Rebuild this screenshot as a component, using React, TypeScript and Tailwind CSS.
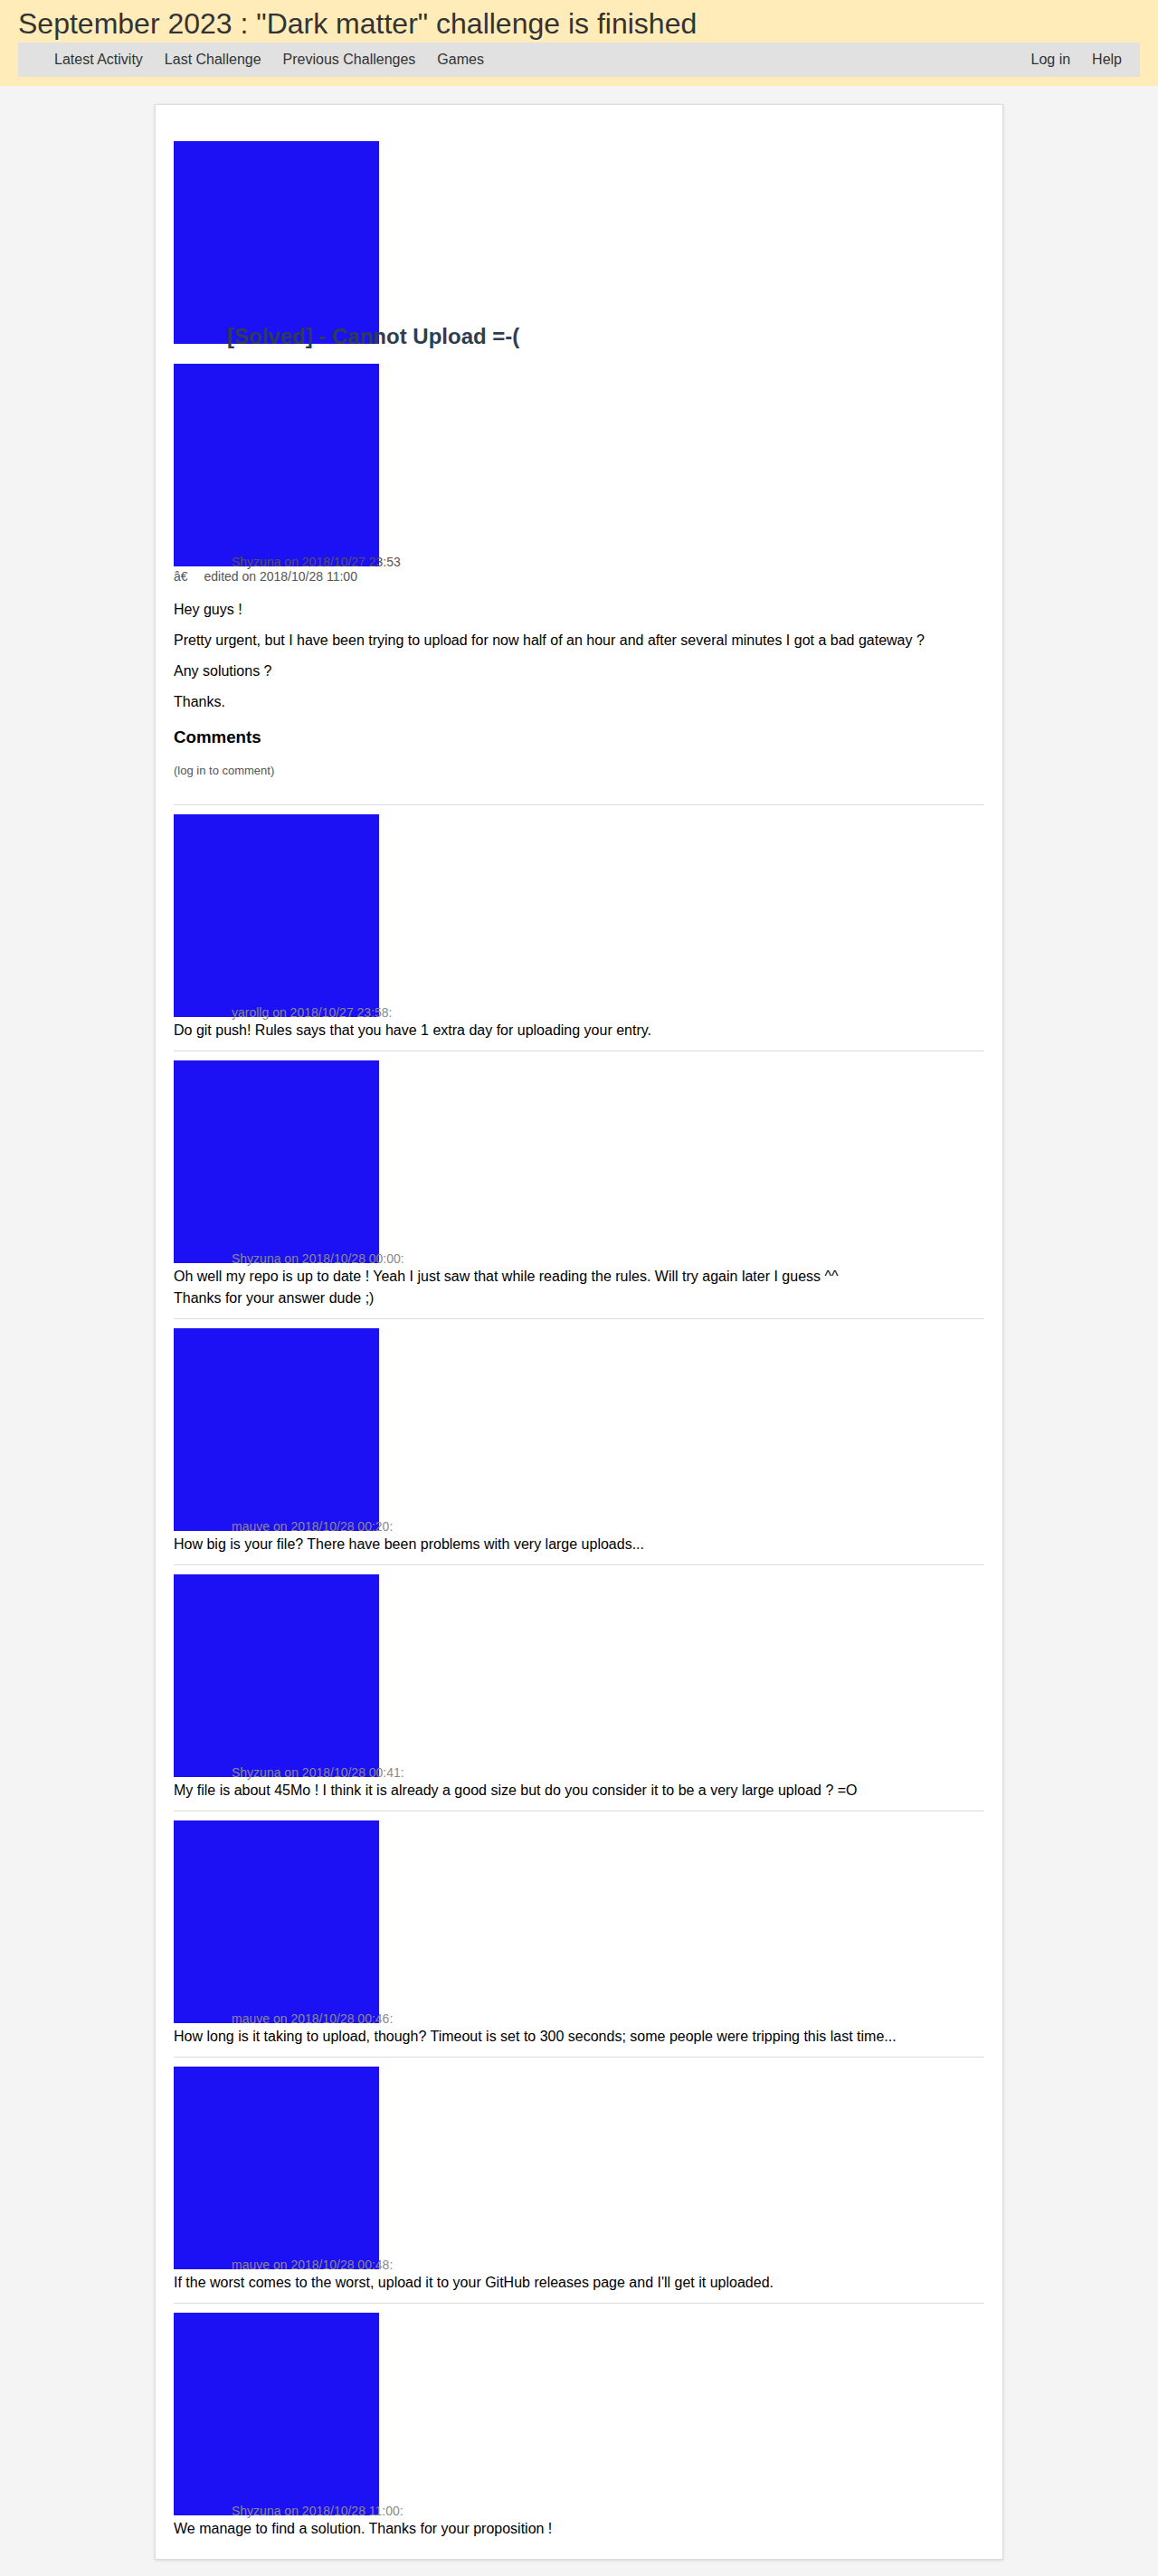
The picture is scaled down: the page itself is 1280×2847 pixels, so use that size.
import React from "react";

interface Comment {
  user: string;
  date: string;
  lines: string[];
}

const comments: Comment[] = [
  {
    user: "yarollg",
    date: "2018/10/27 23:58",
    lines: ["Do git push! Rules says that you have 1 extra day for uploading your entry."],
  },
  {
    user: "Shyzuna",
    date: "2018/10/28 00:00",
    lines: [
      "Oh well my repo is up to date ! Yeah I just saw that while reading the rules. Will try again later I guess ^^",
      "Thanks for your answer dude ;)",
    ],
  },
  {
    user: "mauve",
    date: "2018/10/28 00:20",
    lines: ["How big is your file? There have been problems with very large uploads..."],
  },
  {
    user: "Shyzuna",
    date: "2018/10/28 00:41",
    lines: [
      "My file is about 45Mo ! I think it is already a good size but do you consider it to be a very large upload ? =O",
    ],
  },
  {
    user: "mauve",
    date: "2018/10/28 00:46",
    lines: [
      "How long is it taking to upload, though? Timeout is set to 300 seconds; some people were tripping this last time...",
    ],
  },
  {
    user: "mauve",
    date: "2018/10/28 00:48",
    lines: [
      "If the worst comes to the worst, upload it to your GitHub releases page and I'll get it uploaded.",
    ],
  },
  {
    user: "Shyzuna",
    date: "2018/10/28 11:00",
    lines: ["We manage to find a solution. Thanks for your proposition !"],
  },
];

// avatar placeholder, text runs over it like on the original page
const Avatar = ({ className }: { className: string }) => (
  <span className={`inline-block w-[227px] h-[224px] bg-[#1c10f5] align-baseline ${className}`} />
);

const App = () => {
  return (
    <div className="min-h-screen bg-[#f4f4f4] font-['Liberation_Sans',Arial,sans-serif] pb-4">
      {/* Header */}
      <header className="bg-[#ffecb8] px-5 pt-2 pb-[10px]">
        <h1 className="text-[32px] leading-[normal] text-[#333]">
          September 2023 : "Dark matter" challenge is finished
        </h1>
        <nav className="mt-[2px] h-[38px] bg-[#e1e1e1] flex items-center justify-between pl-10 pr-5 text-[16px] text-[#333]">
          <div className="flex gap-6">
            <a>Latest Activity</a>
            <a>Last Challenge</a>
            <a>Previous Challenges</a>
            <a>Games</a>
          </div>
          <div className="flex gap-6">
            <a>Log in</a>
            <a>Help</a>
          </div>
        </nav>
      </header>

      {/* Post card */}
      <main className="w-[938px] mx-auto mt-5 bg-white border border-[#dcdcdc] shadow-[0_1px_3px_rgba(0,0,0,0.12)] px-5 pt-5 pb-[11px] text-black">
        <h2 className="mt-5 mb-4 text-[24px] font-bold leading-[normal] text-[#2c3e50]">
          <Avatar className="-mr-[168px]" />
          [Solved] - Cannot Upload =-(
        </h2>

        <div className="text-[14px] leading-[normal] text-[#555] mb-5">
          <Avatar className="-mr-[163px]" />
          Shyzuna on 2018/10/27 23:53
          <br />
          â€{"\u2003"} edited on 2018/10/28 11:00
        </div>

        <div className="text-[16px] leading-[normal]">
          <p className="my-4">Hey guys !</p>
          <p className="my-4">
            Pretty urgent, but I have been trying to upload for now half of an hour and after several minutes I got a
            bad gateway ?
          </p>
          <p className="my-4">Any solutions ?</p>
          <p className="my-4">Thanks.</p>
        </div>

        <h3 className="my-[18.72px] text-[18.72px] font-bold leading-[normal]">Comments</h3>
        <p className="text-[13px] leading-[normal] text-[#555] mb-[30px]">(log in to comment)</p>

        {/* Comments */}
        <div>
          {comments.map((c, i) => (
            <div key={i} className="border-t border-[#dcdcdc] pt-[10px] pb-[10px]">
              <div className="text-[14px] leading-[normal] text-[#8a8a8a]">
                <Avatar className="-mr-[163px]" />
                {c.user} on {c.date}:
              </div>
              <div className="text-[16px] leading-6">
                {c.lines.map((l, j) => (
                  <div key={j}>{l}</div>
                ))}
              </div>
            </div>
          ))}
        </div>
      </main>
    </div>
  );
};

export default App;
